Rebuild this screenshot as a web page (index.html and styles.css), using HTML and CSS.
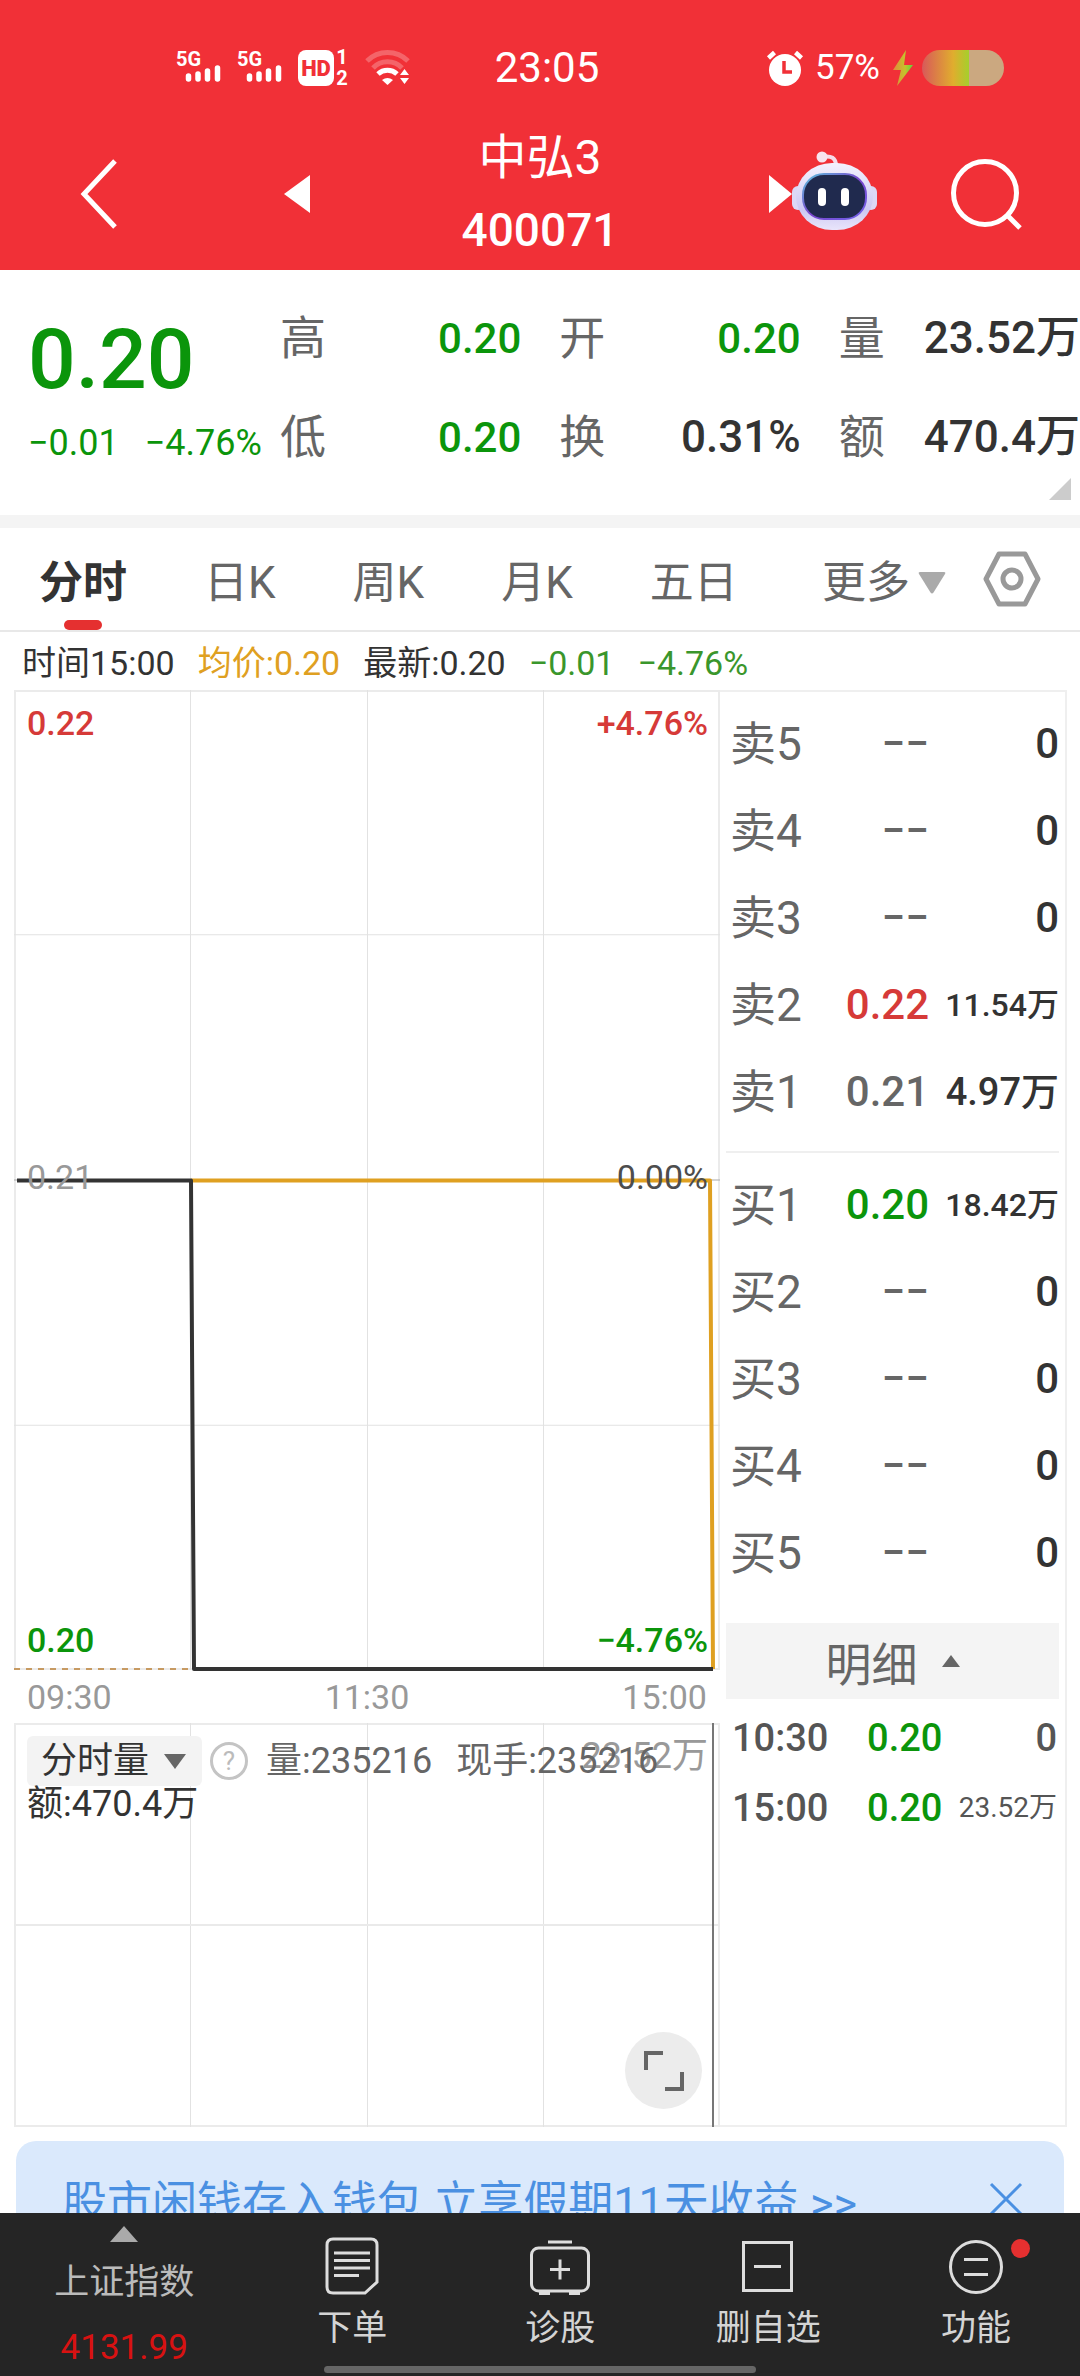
FILE: index.html
```html
<!DOCTYPE html>
<html lang="zh-CN">
<head>
    <meta charset="UTF-8">
    <meta name="viewport" content="width=device-width, initial-scale=1.0">
    <title>中弘3 400071</title>
    <link rel="stylesheet" href="styles.css">
</head>
<body>
    <!-- 顶部区域 -->
    <header class="header">
        <div class="status-bar">
            <div class="status-left">
                <svg class="signal" width="46" height="36" viewBox="0 0 46 36">
                    <text x="0" y="16" class="signal-text">5G</text>
                    <path d="M12.500 26v3M22 24v5M31.500 21v8M41.500 18v11" stroke="#fff" stroke-width="5.500" stroke-linecap="round"/>
                </svg>
                <svg class="signal" width="46" height="36" viewBox="0 0 46 36">
                    <text x="0" y="16" class="signal-text">5G</text>
                    <path d="M12.500 26v3M22 24v5M31.500 21v8M41.500 18v11" stroke="#fff" stroke-width="5.500" stroke-linecap="round"/>
                </svg>
                <svg class="hd" width="52" height="36" viewBox="0 0 52 36">
                    <rect width="36" height="36" rx="8" fill="#fff"/>
                    <text x="18" y="26" text-anchor="middle" class="hd-text">HD</text>
                    <text x="44" y="14" text-anchor="middle" class="hd-num">1</text>
                    <text x="44" y="35" text-anchor="middle" class="hd-num">2</text>
                </svg>
                <svg width="46" height="36" viewBox="0 0 46 36" fill="none" stroke="#fff" stroke-width="5">
                    <path d="M2 11a29 29 0 0 1 41 0" opacity=".25"/>
                    <path d="M8 18a20 20 0 0 1 29 0" opacity=".25"/>
                    <path d="M13 24a14 14 0 0 1 19 0"/>
                    <path d="M17 30q5.500-4 11 0l-5.500 5z" fill="#fff" stroke="none"/>
                    <path d="M35 25h9l-4.500-6zM35 28h9l-4.500 6z" fill="#fff" stroke="none"/>
                </svg>
            </div>
            <time class="status-time">23:05</time>
            <div class="status-right">
                <svg width="36" height="36" viewBox="0 0 36 36">
                    <circle cx="18" cy="20" r="16" fill="#fff"/>
                    <path d="M1.500 8l6-5.500M34.500 8l-6-5.500" stroke="#fff" stroke-width="4.500"/>
                    <path d="M17 11v11h8" stroke="#f13037" stroke-width="3.500" fill="none"/>
                </svg>
                <span class="battery-text">57%</span>
                <svg width="22" height="36" viewBox="0 0 22 36">
                    <defs>
                        <linearGradient id="bolt" x1="0" x2="1">
                            <stop offset="0" stop-color="#e08a3c"/>
                            <stop offset=".6" stop-color="#c5c22c"/>
                            <stop offset="1" stop-color="#58d83c"/>
                        </linearGradient>
                    </defs>
                    <path d="M14 0L1 20h8L5 36 21 15h-9z" fill="url(#bolt)"/>
                </svg>
                <span class="battery"></span>
            </div>
        </div>

        <div class="title-bar">
            <div class="title-left">
                <button class="icon-btn" aria-label="返回">
                    <svg width="38" height="72" viewBox="0 0 38 72"><path d="M35 3L4 36l31 33" fill="none" stroke="#fff" stroke-width="5"/></svg>
                </button>
                <button class="icon-btn" aria-label="上一只">
                    <svg width="26" height="38" viewBox="0 0 26 38"><path d="M26 0v38L0 19z" fill="#fff"/></svg>
                </button>
            </div>
            <h1 class="stock-title">
                <span>中弘3</span>
                <span class="stock-code">400071</span>
            </h1>
            <div class="title-right">
                <div class="robot-group">
                    <button class="icon-btn" aria-label="下一只">
                        <svg width="23" height="38" viewBox="0 0 23 38"><path d="M0 0v38l23-19z" fill="#fff"/></svg>
                    </button>
                    <button class="icon-btn" aria-label="智能助手">
                        <svg width="85" height="86" viewBox="0 0 85 86">
                            <defs>
                                <linearGradient id="shell" x1="0" y1="0" x2="0" y2="1">
                                    <stop offset="0" stop-color="#f4f1fd"/>
                                    <stop offset=".7" stop-color="#ccc8f3"/>
                                    <stop offset="1" stop-color="#e9e5fb"/>
                                </linearGradient>
                                <linearGradient id="rim" x1="0" y1="0" x2="1" y2="1">
                                    <stop offset="0" stop-color="#5cc3dd"/>
                                    <stop offset=".5" stop-color="#7a45cc"/>
                                    <stop offset="1" stop-color="#6f63ea"/>
                                </linearGradient>
                            </defs>
                            <path d="M30 6q14-3 14 9" fill="none" stroke="#f6dce8" stroke-width="4"/>
                            <circle cx="30" cy="6" r="5.500" fill="#f8e4ee"/>
                            <rect x="0" y="35" width="12" height="24" rx="6" fill="#dcd8f6"/>
                            <rect x="73" y="35" width="12" height="24" rx="6" fill="#dcd8f6"/>
                            <rect x="4" y="12" width="77" height="67" rx="36" fill="url(#shell)"/>
                            <rect x="11" y="23" width="63" height="45" rx="21" fill="#202a4e" stroke="url(#rim)" stroke-width="2"/>
                            <rect x="26" y="37" width="8" height="18" rx="4" fill="#fff"/>
                            <rect x="49" y="37" width="8" height="18" rx="4" fill="#fff"/>
                        </svg>
                    </button>
                </div>
                <button class="icon-btn" aria-label="搜索">
                    <svg width="72" height="72" viewBox="0 0 72 72" fill="none" stroke="#fff" stroke-width="5"><circle cx="35" cy="35" r="31.500"/><path d="M57 57l13 13"/></svg>
                </button>
            </div>
        </div>
    </header>

    <main class="content">
        <!-- 报价区域 -->
        <section class="quote">
            <div class="quote-price">
                <div class="price green">0.20</div>
                <div class="change green"><span>−0.01</span><span>−4.76%</span></div>
            </div>
            <dl class="stats">
                <div class="stat"><dt>高</dt><dd class="green">0.20</dd></div>
                <div class="stat"><dt>开</dt><dd class="green">0.20</dd></div>
                <div class="stat"><dt>量</dt><dd>23.52万</dd></div>
                <div class="stat"><dt>低</dt><dd class="green">0.20</dd></div>
                <div class="stat"><dt>换</dt><dd>0.31%</dd></div>
                <div class="stat"><dt>额</dt><dd>470.4万</dd></div>
            </dl>
            <span class="corner"></span>
        </section>

        <!-- 周期切换 -->
        <nav class="tabs">
            <button class="tab active">分时</button>
            <button class="tab">日K</button>
            <button class="tab">周K</button>
            <button class="tab">月K</button>
            <button class="tab">五日</button>
            <button class="tab tab-more">更多
                <svg width="28" height="22" viewBox="0 0 28 22"><path d="M2 0h24q2 0 1 2L15.500 20.500q-1.500 2-3 0L1 2Q0 0 2 0z" fill="#aaa"/></svg>
            </button>
            <button class="icon-btn" aria-label="设置">
                <svg width="58" height="56" viewBox="0 0 58 56" fill="none" stroke="#999" stroke-width="5" stroke-linejoin="round"><path d="M16 3h26l13 25-13 25H16L3 28z"/><circle cx="29" cy="28" r="9"/></svg>
            </button>
        </nav>

        <div class="info-row">
            <span>时间15:00</span>
            <span class="orange">均价:0.20</span>
            <span>最新:0.20</span>
            <span class="green-soft">−0.01</span>
            <span class="green-soft">−4.76%</span>
        </div>

        <div class="board">
            <div class="charts">
                <!-- 分时图 -->
                <div class="plot">
                    <svg class="plot-svg" viewBox="0 0 706 979" preserveAspectRatio="none" fill="none">
                        <path d="M176.500 0v979M353.500 0v979M529.500 0v979M0 244.500h706M0 734.500h706" stroke="#e2e2e2"/>
                        <path d="M0 489.500h706" stroke="#aaa"/>
                        <path d="M0 978h177" stroke="#c79a62" stroke-width="2" stroke-dasharray="6 6"/>
                        <path d="M177 490h519l3 488" stroke="#dfa021" stroke-width="4" stroke-linejoin="round"/>
                        <path d="M3 490h174l3 488h519" stroke="#333" stroke-width="4" stroke-linejoin="round"/>
                    </svg>
                    <span class="label top-left red">0.22</span>
                    <span class="label top-right red">+4.76%</span>
                    <span class="label mid-left">0.21</span>
                    <span class="label mid-right">0.00%</span>
                    <span class="label bottom-left green">0.20</span>
                    <span class="label bottom-right green">−4.76%</span>
                </div>
                <div class="time-axis"><span>09:30</span><span>11:30</span><span>15:00</span></div>

                <!-- 成交量图 -->
                <div class="volume">
                    <svg class="plot-svg" viewBox="0 0 706 404" preserveAspectRatio="none" fill="none">
                        <path d="M176.500 0v404M353.500 0v404M529.500 0v404" stroke="#e2e2e2"/>
                        <path d="M0 202h706" stroke="#eaeaea" stroke-width="2"/>
                        <path d="M699 0v404" stroke="#777" stroke-width="2"/>
                    </svg>
                    <span class="volume-max">23.52万</span>
                    <div class="volume-info">
                        <span class="select-wrap">
                            <select class="volume-select" aria-label="指标">
                                <option>分时量</option>
                            </select>
                        </span>
                        <button class="help" aria-label="说明">?</button>
                        <span class="volume-item">量:235216</span>
                        <span>现手:235216</span>
                    </div>
                    <div class="amount">额:470.4万</div>
                    <button class="expand" aria-label="全屏">
                        <svg width="40" height="40" viewBox="0 0 40 40" fill="none" stroke="#666" stroke-width="4"><path d="M2 19V2h17M38 21v17H21"/></svg>
                    </button>
                </div>
            </div>

            <!-- 五档盘口 -->
            <aside class="order-panel">
                <table class="order-table">
                    <tr><th>卖5</th><td>−−</td><td>0</td></tr>
                    <tr><th>卖4</th><td>−−</td><td>0</td></tr>
                    <tr><th>卖3</th><td>−−</td><td>0</td></tr>
                    <tr><th>卖2</th><td class="red">0.22</td><td class="small">11.54万</td></tr>
                    <tr><th>卖1</th><td>0.21</td><td class="medium">4.97万</td></tr>
                </table>
                <table class="order-table buy">
                    <tr><th>买1</th><td class="green">0.20</td><td class="small">18.42万</td></tr>
                    <tr><th>买2</th><td>−−</td><td>0</td></tr>
                    <tr><th>买3</th><td>−−</td><td>0</td></tr>
                    <tr><th>买4</th><td>−−</td><td>0</td></tr>
                    <tr><th>买5</th><td>−−</td><td>0</td></tr>
                </table>
                <button class="detail-btn">明细
                    <svg width="18" height="12" viewBox="0 0 18 12"><path d="M9 0l9 12H0z" fill="#666"/></svg>
                </button>
                <table class="detail-table">
                    <tr><th>10:30</th><td class="green">0.20</td><td>0</td></tr>
                    <tr><th>15:00</th><td class="green">0.20</td><td class="small">23.52万</td></tr>
                </table>
            </aside>
        </div>

        <!-- 推广条 -->
        <div class="banner">
            <a href="#" class="banner-link">股市闲钱存入钱包 立享假期11天收益 &gt;&gt;</a>
            <button class="icon-btn" aria-label="关闭">
                <svg width="32" height="32" viewBox="0 0 32 32" stroke="#4a90e2" stroke-width="3"><path d="M1 1l30 30M31 1L1 31"/></svg>
            </button>
        </div>
    </main>

    <!-- 底部导航 -->
    <footer class="bottom-nav">
        <button class="index-item">
            <svg width="28" height="16" viewBox="0 0 28 16"><path d="M14 0l14 16H0z" fill="#aaa"/></svg>
            <span class="index-name">上证指数</span>
            <span class="index-value">4131.99</span>
        </button>
        <button class="nav-item">
            <svg width="60" height="60" viewBox="0 0 60 60" fill="none" stroke="#ddd" stroke-width="3"><path d="M11 3h38q6 0 6 6v37L43 57H11q-6 0-6-6V9q0-6 6-6z"/><path d="M12 17h36M12 24.500h36M12 32h36M12 39.500h25"/></svg>
            <span>下单</span>
        </button>
        <button class="nav-item">
            <svg width="60" height="60" viewBox="0 0 60 60" fill="none" stroke="#ddd" stroke-width="3"><rect x="1.500" y="12" width="57" height="43" rx="7"/><path d="M18 6h24M20 33.500h20M30 23.500v20"/><path d="M9 57h11M39 57h11" stroke-width="4"/></svg>
            <span>诊股</span>
        </button>
        <button class="nav-item">
            <svg width="60" height="60" viewBox="0 0 60 60" fill="none" stroke="#ddd" stroke-width="3"><rect x="5.500" y="6.500" width="48" height="48"/><path d="M16 30.500h27"/></svg>
            <span>删自选</span>
        </button>
        <button class="nav-item">
            <svg width="60" height="60" viewBox="0 0 60 60" fill="none" stroke="#ddd" stroke-width="3"><circle cx="30" cy="31" r="25.500"/><path d="M18 23.500h24M18 38.500h24"/></svg>
            <span>功能</span>
            <i class="dot"></i>
        </button>
        <span class="home-bar"></span>
    </footer>
</body>
</html>
```

FILE: styles.css
```css
* {
    margin: 0;
    padding: 0;
    box-sizing: border-box;
    font-family: Roboto, "Noto Sans CJK SC", sans-serif;
}

body {
    display: flex;
    flex-direction: column;
    height: 100vh;
    background-color: #fff;
    color: #333;
    overflow: hidden;
}

button {
    border: none;
    background: none;
    color: inherit;
    cursor: pointer;
}

svg {
    display: block;
    overflow: visible;
}

.green {
    color: #0b950b;
}

.green-soft {
    color: #3a962c;
}

.red {
    color: #d63a38;
}

.orange {
    color: #dfa021;
}

.icon-btn {
    display: block;
}

/* 顶部区域 */
.header {
    flex: none;
    padding-top: 43px;
    background-color: #f13037;
    color: #fff;
}

.status-bar,
.title-bar {
    display: grid;
    grid-template-columns: 1fr auto 1fr;
    align-items: center;
}

.status-bar {
    height: 48px;
    padding-left: 14px;
}

.status-left {
    display: flex;
    gap: 15px;
    padding-left: 162px;
}

.signal-text {
    font-size: 20px;
    font-weight: 700;
    fill: #fff;
}

.hd-text {
    font-size: 22px;
    font-weight: 900;
    fill: #f13037;
}

.hd-num {
    font-size: 20px;
    font-weight: 700;
    fill: #fff;
}

.status-time {
    font-size: 42px;
}

.status-right {
    display: flex;
    align-items: center;
    justify-content: flex-end;
    gap: 8px;
    padding-right: 76px;
}

.battery-text {
    padding: 0 4px;
    font-size: 35px;
}

.battery {
    width: 82px;
    height: 36px;
    border-radius: 18px;
    background: linear-gradient(to right, #d8595a 0, #e0ad2e 38%, #a6cf2c 57%, #cba880 57%);
}

.title-bar {
    height: 179px;
    padding-top: 26px;
}

.title-left {
    display: flex;
    align-items: center;
    gap: 166px;
    padding-left: 80px;
}

.stock-title {
    display: flex;
    flex-direction: column;
    align-items: center;
    font-size: 48px;
    font-weight: 400;
    line-height: 72px;
}

.stock-code {
    font-size: 46px;
    font-weight: 500;
}

.title-right {
    display: flex;
    align-items: center;
    justify-content: flex-end;
    gap: 73px;
    padding-right: 58px;
}

.robot-group {
    display: flex;
    align-items: center;
}

/* 报价区域 */
.content {
    flex: 1;
    min-height: 0;
    overflow: hidden;
}

.quote {
    position: relative;
    display: flex;
    padding: 19px 0 28px;
    border-bottom: 13px solid #f4f4f4;
}

.quote-price {
    flex: none;
    width: 280px;
    padding: 23px 0 0 28px;
    white-space: nowrap;
}

.price {
    font-size: 84px;
    font-weight: 500;
    line-height: 96px;
}

.change {
    display: flex;
    gap: 26px;
    font-size: 36px;
    line-height: 70px;
}

.stats {
    flex: 1;
    display: grid;
    grid-template-columns: repeat(3, 1fr);
    column-gap: 38px;
}

.stat {
    display: flex;
    justify-content: space-between;
    font-size: 46px;
    line-height: 99px;
    white-space: nowrap;
}

.stat dt {
    color: #666;
}

.stat dd {
    font-size: 44px;
    font-weight: 500;
}

.stat dd.green {
    font-size: 42px;
}

.corner {
    position: absolute;
    right: 9px;
    bottom: 15px;
    border-left: 22px solid transparent;
    border-bottom: 22px solid #ccc;
}

/* 周期切换 */
.tabs {
    display: flex;
    align-items: center;
    gap: 77px;
    height: 104px;
    padding: 0 39px;
    border-bottom: 2px solid #e8e8e8;
}

.tab {
    position: relative;
    padding-top: 8px;
    font-size: 44px;
    line-height: 94px;
    color: #666;
    white-space: nowrap;
}

.tab.active {
    font-weight: 700;
    color: #333;
}

.tab.active::after {
    content: "";
    position: absolute;
    left: 25px;
    bottom: 0;
    width: 38px;
    height: 10px;
    border-radius: 5px;
    background-color: #e53030;
}

.tab-more {
    display: flex;
    align-items: center;
    gap: 8px;
    margin-left: auto;
}

.tabs .icon-btn {
    margin-left: -40px;
}

.info-row {
    display: flex;
    gap: 23px;
    padding: 4px 0 0 22px;
    font-size: 34px;
    line-height: 54px;
    white-space: nowrap;
}

/* 图表与盘口 */
.board {
    display: grid;
    grid-template-columns: 706fr 347fr;
    margin: 0 13px 0 14px;
}

.charts {
    min-width: 0;
}

.plot,
.volume {
    position: relative;
    border: 2px solid #ebebeb;
}

.plot {
    height: 980px;
    font-size: 34px;
    font-weight: 500;
    line-height: 40px;
}

.plot-svg {
    position: absolute;
    top: -2px;
    left: -2px;
    width: calc(100% + 4px);
    height: calc(100% + 4px);
}

.label {
    position: absolute;
}

.top-left,
.top-right {
    top: 11px;
}

.mid-left,
.mid-right {
    top: 465px;
    font-weight: 400;
}

.mid-left {
    color: #999;
}

.mid-right {
    color: #4d4d4d;
}

.bottom-left,
.bottom-right {
    bottom: 8px;
}

.top-left,
.mid-left,
.bottom-left {
    left: 11px;
}

.top-right,
.mid-right,
.bottom-right {
    right: 10px;
}

.time-axis {
    display: flex;
    justify-content: space-between;
    padding: 1px 13px 0;
    font-size: 34px;
    line-height: 52px;
    color: #999;
}

.volume {
    height: 404px;
    padding: 11px 11px 0;
    font-size: 36px;
    color: #666;
    white-space: nowrap;
}

.volume-info {
    position: relative;
    display: flex;
    align-items: center;
    line-height: 50px;
}

.select-wrap {
    position: relative;
}

.select-wrap::after {
    content: "";
    position: absolute;
    right: 16px;
    top: 18px;
    border-left: 11px solid transparent;
    border-right: 11px solid transparent;
    border-top: 15px solid #666;
}

.volume-select {
    display: block;
    width: 175px;
    height: 50px;
    padding-left: 14px;
    border: none;
    border-radius: 6px;
    background-color: #f3f3f3;
    font-size: 36px;
    color: #333;
    appearance: none;
}

.help {
    width: 38px;
    height: 38px;
    margin: 0 18px 0 8px;
    border: 3px solid #c4c4c4;
    border-radius: 50%;
    font-size: 26px;
    line-height: 32px;
    color: #bbb;
}

.volume-item {
    margin-right: 24px;
}

.amount {
    position: relative;
    line-height: 36px;
    color: #333;
}

.volume-max {
    position: absolute;
    right: 10px;
    top: 6px;
    line-height: 50px;
    color: #999;
}

.expand {
    position: absolute;
    right: 16px;
    bottom: 16px;
    display: flex;
    align-items: center;
    justify-content: center;
    width: 77px;
    height: 77px;
    border-radius: 50%;
    background-color: #ececec;
}

/* 五档盘口 */
.order-panel {
    padding: 8px 6px 0;
    border: 2px solid #efefef;
    border-left: none;
}

.order-table,
.detail-table {
    width: 100%;
    border-collapse: collapse;
    table-layout: fixed;
    line-height: 48px;
    white-space: nowrap;
}

.order-table th {
    width: 30%;
    height: 87px;
    padding-left: 4px;
    font-size: 46px;
    font-weight: 400;
    text-align: left;
    color: #666;
}

.order-table td {
    font-size: 42px;
    font-weight: 500;
    text-align: right;
}

.order-table td:nth-child(2) {
    width: 31%;
    color: #666;
}

.order-table td:nth-child(2).red {
    color: #d63a38;
}

.order-table td:nth-child(2).green {
    color: #0b950b;
}

.order-table td.small {
    font-size: 32px;
}

.order-table td.medium {
    font-size: 38px;
}

.buy {
    margin-top: 16px;
    border-top: 2px solid #efefef;
    border-collapse: separate;
    border-spacing: 0;
    padding-top: 8px;
}

.detail-btn {
    display: flex;
    align-items: center;
    justify-content: center;
    gap: 24px;
    width: 100%;
    height: 76px;
    margin: 27px 0 4px;
    background-color: #f4f4f4;
    font-size: 46px;
    color: #666;
}

.detail-table th,
.detail-table td {
    height: 70px;
    font-size: 38px;
    font-weight: 500;
    text-align: right;
    color: #555;
}

.detail-table th {
    width: 31%;
    padding-left: 6px;
    text-align: left;
}

.detail-table td:nth-child(2) {
    width: 34%;
    color: #0b950b;
}

.detail-table td:last-child {
    padding-right: 2px;
}

.detail-table td.small {
    font-size: 28px;
    font-weight: 400;
}

/* 推广条 */
.banner {
    display: flex;
    align-items: center;
    justify-content: space-between;
    height: 116px;
    margin: 14px 16px 0;
    padding: 0 42px 0 46px;
    border-radius: 20px;
    background-color: #dae9fc;
}

.banner-link {
    font-size: 45px;
    color: #4a90e2;
    text-decoration: none;
    white-space: nowrap;
}

/* 底部导航 */
.bottom-nav {
    position: relative;
    flex: none;
    display: grid;
    grid-template-columns: 23% repeat(4, 1fr);
    height: 163px;
    background-color: #252525;
    color: #d4d4d4;
}

.nav-item,
.index-item {
    position: relative;
    display: flex;
    flex-direction: column;
    align-items: center;
    font-size: 35px;
}

.index-item {
    padding-top: 13px;
    line-height: 65px;
    color: #bbb;
}

.index-item svg {
    margin-bottom: 8px;
}

.index-value {
    color: #d81212;
}

.nav-item {
    padding-top: 23px;
    line-height: 66px;
}

.dot {
    position: absolute;
    top: 26px;
    left: 50%;
    width: 19px;
    height: 19px;
    margin-left: 35px;
    border-radius: 50%;
    background-color: #e53030;
}

.home-bar {
    position: absolute;
    left: 30%;
    right: 30%;
    bottom: 3px;
    height: 7px;
    border-radius: 4px;
    background-color: #666;
}
```
